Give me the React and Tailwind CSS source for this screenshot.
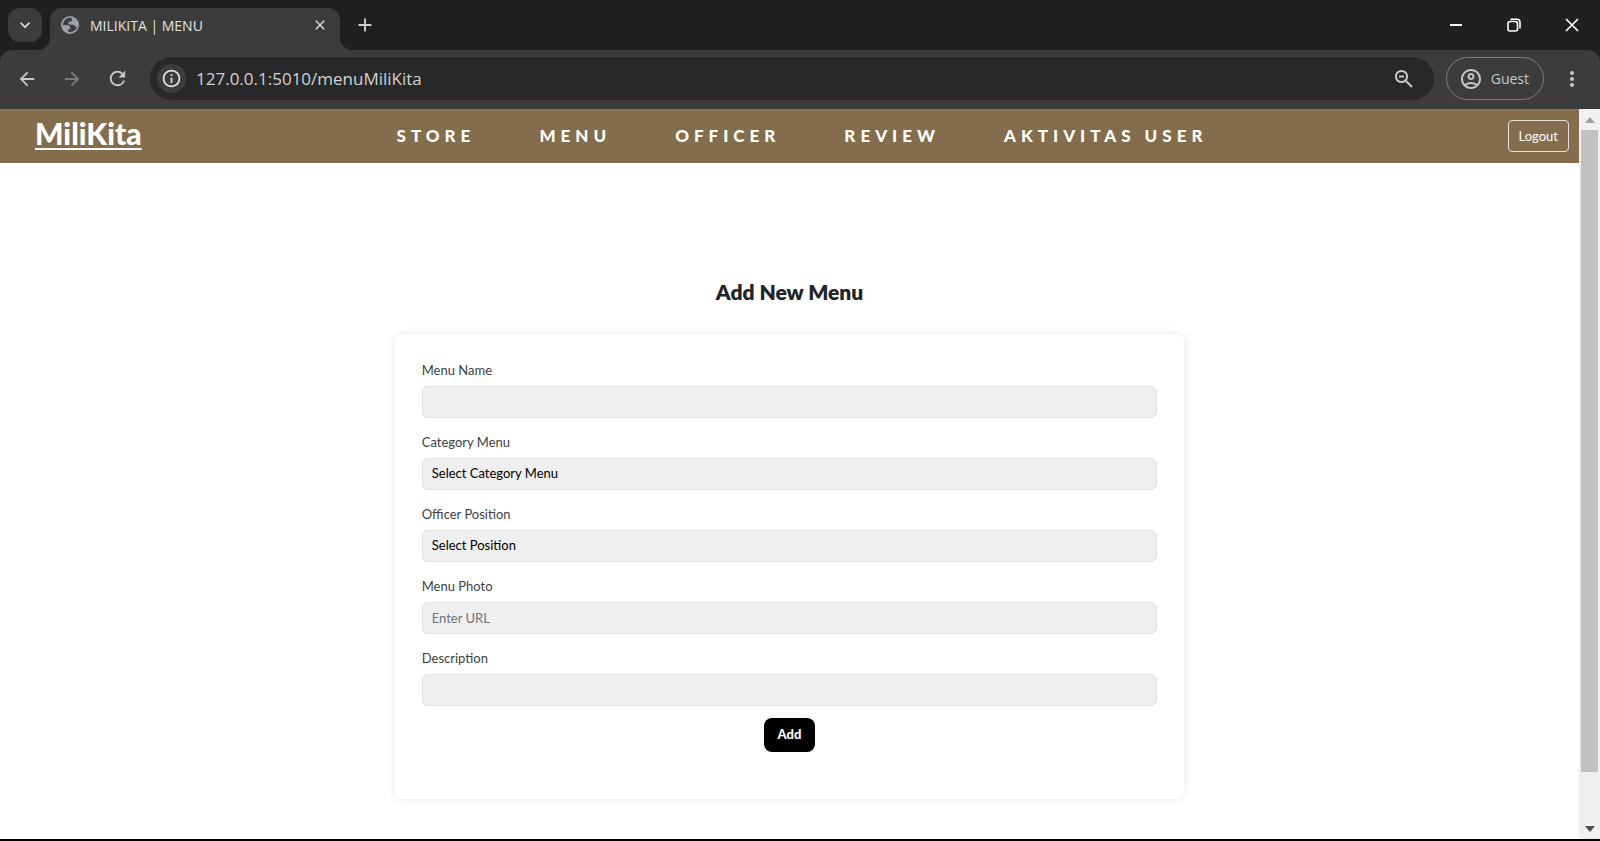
import React from "react";
import {
  MdAdd,
  MdArrowBack,
  MdArrowForward,
  MdClose,
  MdInfoOutline,
  MdKeyboardArrowDown,
  MdMoreVert,
  MdOutlineAccountCircle,
  MdRefresh,
} from "react-icons/md";

const navItems = ["Store", "Menu", "Officer", "Review", "Aktivitas User"];

function TabCurve({ className, d }) {
  return (
    <svg aria-hidden="true" viewBox="0 0 12 12" className={`absolute bottom-0 size-3 fill-[#3c3c3c] ${className}`}>
      <path d={d} />
    </svg>
  );
}

function GlobeIcon() {
  return (
    <svg aria-hidden="true" viewBox="0 0 18 18" className="size-[18px]">
      <circle cx="9" cy="9" r="8.1" className="fill-[#3c3c3c] stroke-[#9aa0a6] [stroke-width:1.8]" />
      <path className="fill-[#9aa0a6]" d="M10 1C14 1 17 4.500 17 9l-.3 1.600c-1.300.5-2.900.2-3.300-.8-.3-.8-1.100-1-2-1H9.200c-1.200 0-2-.7-2-1.700S8 5.500 9 5.500h.6c.8 0 1.200-.4 1.200-1.100V3.500z" />
      <path className="fill-[#9aa0a6]" d="M1 9h4.800c2 0 3.300 1.200 3.300 2.700 0 1.300-.7 1.700-1.900 1.700v3.300C3.500 16.500 1 13 1 9z" />
    </svg>
  );
}

function ZoomOutIcon() {
  return (
    <svg aria-hidden="true" viewBox="0 0 20 20" className="size-5 fill-none stroke-current stroke-2">
      <circle cx="7.500" cy="7.500" r="5.600" />
      <path d="M11.700 11.700L18 18" />
      <path d="M5 7.500h5" />
    </svg>
  );
}

function TabStrip() {
  return (
    <div className="flex h-[50px] items-start pt-2 pl-2">
      <button type="button" aria-label="Search tabs" className="flex size-[34px] items-center justify-center rounded-xl bg-[#3c3c3c] text-[#e3e3e3]">
        <MdKeyboardArrowDown className="size-5 stroke-current" />
      </button>
      <div className="relative ml-2 flex h-[42px] w-[290px] items-center rounded-t-xl bg-[#3c3c3c] pb-2 pl-[11px]">
        <TabCurve className="-left-3" d="M12 0v12H0A12 12 0 0 0 12 0z" />
        <TabCurve className="-right-3" d="M0 0v12h12A12 12 0 0 1 0 0z" />
        <GlobeIcon />
        <span className="flex-1 pt-0.5 pl-[11px] text-sm leading-5">MILIKITA | MENU</span>
        <button type="button" aria-label="Close tab" className="mr-3 flex items-center justify-center text-[#e3e3e3]">
          <MdClose className="size-4" />
        </button>
      </div>
      <button type="button" aria-label="New tab" className="ml-3.5 flex h-[34px] items-center text-[#d0d0d0]">
        <MdAdd className="size-[22px]" />
      </button>
      <div className="ml-auto flex h-[34px] items-center gap-11 pr-[21px] text-white">
        <button type="button" aria-label="Minimize">
          <svg viewBox="0 0 14 14" className="size-3.5 stroke-current stroke-2">
            <path d="M1 7h12" />
          </svg>
        </button>
        <button type="button" aria-label="Restore">
          <svg viewBox="0 0 14 14" className="size-3.5 fill-none stroke-current [stroke-width:1.6]">
            <rect x="1" y="3.5" width="9.5" height="9.5" rx="2" />
            <path d="M3.5 1.2H10A3 3 0 0 1 13 4.2v6.3" />
          </svg>
        </button>
        <button type="button" aria-label="Close window">
          <svg viewBox="0 0 14 14" className="size-3.5 stroke-current [stroke-width:1.7]">
            <path d="M1 1l12 12M13 1L1 13" />
          </svg>
        </button>
      </div>
    </div>
  );
}

function Toolbar() {
  return (
    <div className="flex h-[59px] items-center rounded-t-xl bg-[#3c3c3c] pr-4 pb-0.5 pl-4 text-[#c7c7c7]">
      <button type="button" aria-label="Back"><MdArrowBack className="size-[22px]" /></button>
      <button type="button" aria-label="Forward" disabled className="ml-[23px] text-[#7c7c7c]"><MdArrowForward className="size-[22px]" /></button>
      <button type="button" aria-label="Reload" className="ml-[23px]"><MdRefresh className="size-[23px]" /></button>
      <div className="ml-[21px] flex h-[43px] flex-1 items-center rounded-full bg-[#282828] pr-5 pl-[7px]">
        <button type="button" aria-label="Site information" className="flex size-[29px] items-center justify-center rounded-full bg-[#3c3c3c] text-[#e3e3e3]">
          <MdInfoOutline className="size-[21px]" />
        </button>
        <input
          aria-label="Address"
          defaultValue="127.0.0.1:5010/menuMiliKita"
          className="min-w-0 flex-1 bg-transparent pl-2.5 text-[17px] leading-6 text-[#d2d2d2] outline-none"
        />
        <button type="button" aria-label="Zoom"><ZoomOutIcon /></button>
      </div>
      <button type="button" className="ml-3 flex h-[43px] items-center gap-2 rounded-full border border-[#7c7c7c] pr-3.5 pl-3 text-sm">
        <MdOutlineAccountCircle className="size-6" />
        Guest
      </button>
      <button type="button" aria-label="More" className="ml-4"><MdMoreVert className="size-6" /></button>
    </div>
  );
}

function NavBar() {
  return (
    <header className="grid h-[54px] grid-cols-[1fr_auto_1fr] items-center bg-[#846d4c] pr-2.5 pl-[35px] text-white">
      <a href="#" className="justify-self-start pb-1.5 text-3xl leading-8 font-black underline decoration-2 underline-offset-3">
        MiliKita
      </a>
      <nav className="flex gap-16">
        {navItems.map((item) => (
          <a key={item} href="#" className="text-[17px] leading-6 font-black tracking-[5px] uppercase">
            {item}
          </a>
        ))}
      </nav>
      <button type="button" className="h-8 justify-self-end rounded border border-[#e6e1da] px-2.5 text-[13px] leading-5">
        Logout
      </button>
    </header>
  );
}

const controlClass =
  "h-8 w-full appearance-none rounded-md border border-[#e0e2e5] bg-[#efefef] px-[9px] text-[13px] text-black outline-none placeholder:text-[#6c757d]";

function Field({ id, label, options, placeholder }) {
  return (
    <div className="flex flex-col gap-2">
      <label htmlFor={id} className="text-[13px] leading-4 text-[#3d4144]">{label}</label>
      {options ? (
        <select id={id} className={controlClass}>
          {options.map((o) => <option key={o}>{o}</option>)}
        </select>
      ) : (
        <input id={id} type="text" placeholder={placeholder} className={controlClass} />
      )}
    </div>
  );
}

function ScrollBar() {
  return (
    <div aria-hidden="true" className="flex w-[21px] flex-col items-center bg-[#f0f0f0]">
      <div className="flex h-[21px] items-center">
        <svg viewBox="0 0 10 6" className="w-2.5 fill-[#a3a3a3]"><path d="M0 6L5 0l5 6z" /></svg>
      </div>
      <div className="w-[17px] grow-[14] bg-[#c1c1c1]" />
      <div className="grow" />
      <div className="flex h-[21px] items-center">
        <svg viewBox="0 0 10 6" className="w-2.5 fill-[#505050]"><path d="M0 0h10L5 6z" /></svg>
      </div>
    </div>
  );
}

export default function App() {
  return (
    <div className="flex min-h-screen flex-col border-b-2 border-black bg-[#1f2020]">
      <div className="font-['Open_Sans',sans-serif] text-[#e3e3e3]">
        <TabStrip />
        <Toolbar />
      </div>
      <div className="flex flex-1">
        <div className="flex flex-1 flex-col bg-white font-['Lato',sans-serif]">
          <NavBar />
          <main className="flex flex-col items-center pt-[114px] pb-8">
            <h1 className="text-[21px] leading-[30px] font-extrabold text-[#212529]">Add New Menu</h1>
            <form className="mt-[27px] flex w-1/2 flex-col gap-4 rounded-lg px-[27px] pt-7 pb-[47px] shadow-[0_0_10px_rgba(0,0,0,0.1)]">
              <Field id="name" label="Menu Name" />
              <Field id="category" label="Category Menu" options={["Select Category Menu"]} />
              <Field id="position" label="Officer Position" options={["Select Position"]} />
              <Field id="photo" label="Menu Photo" placeholder="Enter URL" />
              <Field id="description" label="Description" />
              <button type="submit" className="-mt-1 h-[34px] self-center rounded-lg bg-black px-3.5 text-[13px] font-black text-white">
                Add
              </button>
            </form>
          </main>
        </div>
        <ScrollBar />
      </div>
    </div>
  );
}
